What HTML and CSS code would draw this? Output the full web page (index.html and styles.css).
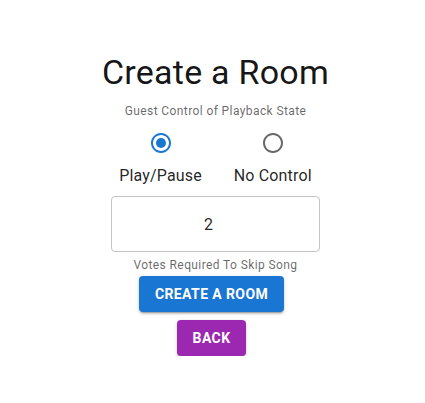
FILE: index.html
```html
<!DOCTYPE html>
<html lang="en">
<head>
<meta charset="utf-8">
<title>Create a Room</title>
<link rel="stylesheet" href="styles.css">
</head>
<body>
<div class="page">
  <h4 class="title">Create a Room</h4>
  <div class="helper helper-top">Guest Control of Playback State</div>
  <div class="radio-group">
    <label class="radio-label">
      <span class="radio">
        <svg viewBox="0 0 24 24" width="24" height="24" class="radio-icon checked">
          <path d="M12 2C6.48 2 2 6.48 2 12s4.48 10 10 10 10-4.48 10-10S17.52 2 12 2zm0 18c-4.42 0-8-3.58-8-8s3.58-8 8-8 8 3.58 8 8-3.58 8-8 8z"/>
          <circle cx="12" cy="12" r="5"/>
        </svg>
      </span>
      <span class="label-text">Play/Pause</span>
    </label>
    <label class="radio-label">
      <span class="radio">
        <svg viewBox="0 0 24 24" width="24" height="24" class="radio-icon">
          <path d="M12 2C6.48 2 2 6.48 2 12s4.48 10 10 10 10-4.48 10-10S17.52 2 12 2zm0 18c-4.42 0-8-3.58-8-8s3.58-8 8-8 8 3.58 8 8-3.58 8-8 8z"/>
        </svg>
      </span>
      <span class="label-text">No Control</span>
    </label>
  </div>
  <div class="field">
    <div class="input-box"><span class="input-value">2</span></div>
    <div class="helper helper-votes">Votes Required To Skip Song</div>
  </div>
  <div class="btn-row">
    <button class="btn btn-primary">Create A Room</button>
  </div>
  <div class="btn-row">
    <button class="btn btn-secondary">Back</button>
  </div>
</div>
</body>
</html>
```
FILE: styles.css
```css
html, body {
  margin: 0;
  padding: 0;
  background: #ffffff;
}

body {
  font-family: Roboto, "Liberation Sans", Arial, sans-serif;
  color: rgba(0, 0, 0, 0.87);
}

.page {
  display: flex;
  flex-direction: column;
  align-items: center;
  padding-top: 51px;
  padding-left: 6px;
}

.title {
  margin: 0;
  font-size: 34px;
  font-weight: 400;
  line-height: 42px;
  letter-spacing: 0.25px;
  color: rgba(0, 0, 0, 0.92);
}

.helper {
  font-size: 12px;
  line-height: 20px;
  letter-spacing: 0.4px;
  color: rgba(0, 0, 0, 0.6);
  text-align: center;
}

.helper-top {
  margin-top: 8px;
}

.radio-group {
  display: flex;
  flex-direction: row;
  margin-top: 1px;
}

.radio-label {
  display: flex;
  flex-direction: column;
  align-items: center;
  margin: 0 16px;
}

.radio {
  display: flex;
  padding: 9px;
}

.radio-icon {
  fill: rgba(0, 0, 0, 0.6);
}

.radio-icon.checked {
  fill: #1976d2;
}

.label-text {
  font-size: 16px;
  line-height: 24px;
  letter-spacing: 0.15px;
}

.field {
  display: flex;
  flex-direction: column;
  align-items: center;
  margin-top: 8px;
}

.input-box {
  box-sizing: border-box;
  width: 209px;
  height: 56px;
  border: 1px solid rgba(0, 0, 0, 0.23);
  border-radius: 4px;
  display: flex;
  align-items: center;
  justify-content: center;
  padding: 0 28px 0 14px;
}

.input-value {
  font-size: 16px;
  letter-spacing: 0.15px;
  color: rgba(0, 0, 0, 0.87);
}

.helper-votes {
  margin-top: 3px;
}

.btn-row {
  display: flex;
  justify-content: center;
  padding-right: 8px;
  margin-top: 1px;
}

.btn-row + .btn-row {
  margin-top: 8px;
}

.btn {
  font-family: Roboto, "Liberation Sans", Arial, sans-serif;
  font-size: 14px;
  font-weight: 700;
  line-height: 24px;
  letter-spacing: 0.4px;
  text-transform: uppercase;
  color: #ffffff;
  border: none;
  border-radius: 4px;
  padding: 6px 16px;
  min-width: 64px;
  box-shadow: 0 3px 1px -2px rgba(0, 0, 0, 0.2), 0 2px 2px 0 rgba(0, 0, 0, 0.14), 0 1px 5px 0 rgba(0, 0, 0, 0.12);
}

.btn-primary {
  background: #1976d2;
}

.btn-secondary {
  background: #9c27b0;
}
```
